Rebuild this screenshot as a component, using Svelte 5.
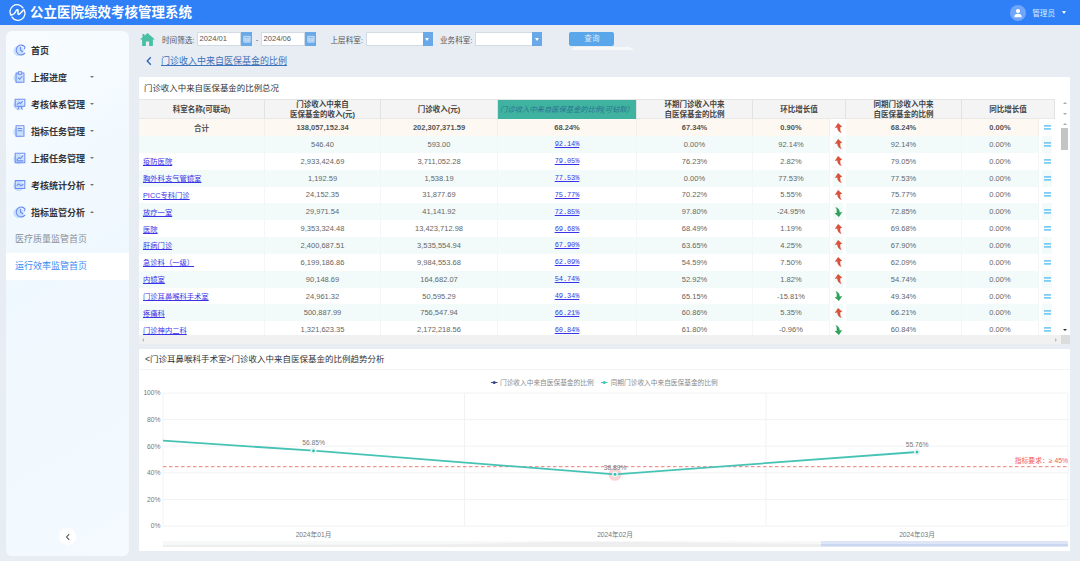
<script>
  const nav = [
    { label: '首页', icon: 'clock' },
    { label: '上报进度', icon: 'clip', caret: 'down' },
    { label: '考核体系管理', icon: 'board', caret: 'down' },
    { label: '指标任务管理', icon: 'book', caret: 'down' },
    { label: '上报任务管理', icon: 'doc', caret: 'down' },
    { label: '考核统计分析', icon: 'wave', caret: 'down' },
    { label: '指标监管分析', icon: 'clock', caret: 'up' }
  ];
  const iconPaths = {
    clock: 'M13.6 4.4A5.6 5.6 0 1 0 13.6 11.6M8.5 4.8V8L11 10M11.5 3.2L13.8 4.4L13 6.8',
    clip: 'M5.2 3.5H3.5V14H12.5V3.5H10.8M6 2H10V4.8H6ZM6 9L7.6 10.6L10.2 7.4',
    board: 'M2.5 2.5H13.5V10.5H2.5ZM5.5 14L7 10.5M10.5 14L9 10.5M4.8 8.5L7 6.3L8.5 7.6L11.2 4.8',
    book: 'M3.5 2H12.5V14H3.5ZM5.8 5.2H10.2M5.8 7.8H10.2',
    doc: 'M2.5 2.5H13.5V13.5H2.5ZM4.5 9.8L7 7.5L8.5 8.6L11.5 5.2M4.5 11.3H11.5',
    wave: 'M2.5 3H13.5V12H2.5ZM4.5 8.5L6.5 6.6L9 9L11.5 7.2'
  };
  const rows = [
    ['', '546.40', '593.00', '92.14%', '0.00%', '92.14%', 1, '92.14%'],
    ['疫防医院', '2,933,424.69', '3,711,052.28', '79.05%', '76.23%', '2.82%', 1, '79.05%'],
    ['胸外科支气管镜室', '1,192.59', '1,538.19', '77.53%', '0.00%', '77.53%', 1, '77.53%'],
    ['PICC专科门诊', '24,152.35', '31,877.69', '75.77%', '70.22%', '5.55%', 1, '75.77%'],
    ['放疗一室', '29,971.54', '41,141.92', '72.85%', '97.80%', '-24.95%', 0, '72.85%'],
    ['医院', '9,353,324.48', '13,423,712.98', '69.68%', '68.49%', '1.19%', 1, '69.68%'],
    ['肝病门诊', '2,400,687.51', '3,535,554.94', '67.90%', '63.65%', '4.25%', 1, '67.90%'],
    ['急诊科（一级）', '6,199,186.86', '9,984,553.68', '62.09%', '54.59%', '7.50%', 1, '62.09%'],
    ['内镜室', '90,148.69', '164,682.07', '54.74%', '52.92%', '1.82%', 1, '54.74%'],
    ['门诊耳鼻喉科手术室', '24,961.32', '50,595.29', '49.34%', '65.15%', '-15.81%', 0, '49.34%'],
    ['疼痛科', '500,887.99', '756,547.94', '66.21%', '60.86%', '5.35%', 1, '66.21%'],
    ['门诊神内二科', '1,321,623.35', '2,172,218.56', '60.84%', '61.80%', '-0.96%', 0, '60.84%']
  ];
  const yTicks = [['100%', 23], ['80%', 49.6], ['60%', 76.2], ['40%', 102.8], ['20%', 129.4], ['0%', 156]];
  const xLines = [24, 325.5, 627, 929];
  const points = [
    { x: 174.5, y: 80.7, label: '56.85%', ly: 75 },
    { x: 476, y: 104.3, label: '38.89%', ly: 99.5 },
    { x: 778, y: 82, label: '55.76%', ly: 76.7 }
  ];
  const xLabels = [['2024年01月', 174.5], ['2024年02月', 476], ['2024年03月', 778]];
</script>

{#snippet arrow(up)}
  <svg class="arrow" class:down={!up} viewBox="0 0 10 11" aria-hidden="true">
    <path d="M4.5 0 L9.2 4.2 L7 4.6 L7 7 C7 8.5 7.5 9.8 8.6 11 C5.5 10.2 3.6 8 3.6 5 L.8 5.4 Z" />
  </svg>
{/snippet}

{#snippet equals()}
  <svg class="equals" viewBox="0 0 7 5" aria-hidden="true">
    <rect x="0" y="0.2" width="7" height="1.4" />
    <rect x="0" y="3.2" width="7" height="1.4" />
  </svg>
{/snippet}

{#snippet calBtn()}
  <span class="cal">
    <svg viewBox="0 0 9 9" aria-hidden="true"><path d="M1 1.5H8V8H1ZM1 3.5H8M3.3 3.5V8M5.7 3.5V8M1 5.7H8" /></svg>
  </span>
{/snippet}

{#snippet selectBox(width)}
  <span class="select" style="width:{width}px"><i></i></span>
{/snippet}

<div class="app">
  <header class="top">
    <svg class="logo" viewBox="0 0 18 18" aria-hidden="true">
      <path d="M14.8 4.2A7.4 7.4 0 0 0 2.2 12M3.2 13.8A7.4 7.4 0 0 0 15.8 6" />
      <path class="swoosh" d="M3 11.2C5.8 11.8 6.4 9.4 7.4 7.4C8.2 5.8 9.6 5.6 9.6 7.2C9.6 9 9 11 10.2 11C11.6 11 13 8.6 15 6.8" />
    </svg>
    <h1>公立医院绩效考核管理系统</h1>
    <div class="user">
      <span class="avatar">
        <svg viewBox="0 0 12 12" aria-hidden="true"><circle cx="6" cy="3.6" r="2.5" /><path d="M1.5 11C1.5 8 3.5 7 6 7S10.5 8 10.5 11Z" /></svg>
      </span>
      <span class="uname">管理员</span>
      <i class="user-caret"></i>
    </div>
  </header>

  <div class="body">
    <aside class="side">
      <nav>
        {#each nav as item}
          <div class="nav-item">
            <svg class="nav-icon" viewBox="0 0 16 16" aria-hidden="true">
              <circle class="blob" cx="6.5" cy="9" r="6" />
              <path d={iconPaths[item.icon]} />
            </svg>
            <span class="nav-label">{item.label}</span>
            {#if item.caret}<i class="caret {item.caret}"></i>{/if}
          </div>
        {/each}
        <div class="sub-item">医疗质量监管首页</div>
        <div class="sub-item active">运行效率监管首页</div>
      </nav>
      <button class="collapse" aria-label="收起">
        <svg viewBox="0 0 8 8" aria-hidden="true"><path d="M5.2 1.2L2.6 4L5.2 6.8" /></svg>
      </button>
    </aside>

    <main class="main">
      <div class="toolbar">
        <svg class="home" viewBox="0 0 16 14" aria-hidden="true">
          <path d="M8 0L16 7H13.8V14H9.7V9.2H6.3V14H2.2V7H0L2.6 4.7V1H4.6V2.9Z" />
        </svg>
        <span class="lbl first">时间筛选:</span>
        <span class="date">2024/01</span>{@render calBtn()}
        <span class="dash">-</span>
        <span class="date">2024/06</span>{@render calBtn()}
        <span class="lbl second">上层科室:</span>
        {@render selectBox(67)}
        <span class="lbl third">业务科室:</span>
        {@render selectBox(67)}
        <div class="query-wrap">
          <button class="query">查询</button>
          <span class="tip"></span>
        </div>
      </div>

      <div class="crumb">
        <svg viewBox="0 0 8 10" aria-hidden="true"><path d="M5.8 1.2L2.2 5L5.8 8.8" /></svg>
        <a href="#top">门诊收入中来自医保基金的比例</a>
      </div>

      <section class="panel table-panel">
        <h2>门诊收入中来自医保基金的比例总况</h2>
        <div class="table-wrap">
          <div class="table-col">
            <div class="grid head">
              <div>科室名称(可联动)</div>
              <div>门诊收入中来自<br />医保基金的收入(元)</div>
              <div>门诊收入(元)</div>
              <div class="hl">门诊收入中来自医保基金的比例(可钻取）</div>
              <div>环期门诊收入中来<br />自医保基金的比例</div>
              <div class="span2">环比增长值</div>
              <div>同期门诊收入中来<br />自医保基金的比例</div>
              <div class="span2">同比增长值</div>
            </div>
            <div class="grid row total">
              <div>合计</div>
              <div>138,057,152.34</div>
              <div>202,307,371.59</div>
              <div>68.24%</div>
              <div>67.34%</div>
              <div>0.90%</div>
              <div class="ico"><span>{@render arrow(true)}</span></div>
              <div>68.24%</div>
              <div>0.00%</div>
              <div class="ico"><span>{@render equals()}</span></div>
            </div>
            {#each rows as r, i}
              <div class="grid row" class:tint={i % 2 === 0}>
                <div class="name"><a href="#top">{r[0]}</a></div>
                <div>{r[1]}</div>
                <div>{r[2]}</div>
                <div><a class="mono" href="#top">{r[3]}</a></div>
                <div>{r[4]}</div>
                <div>{r[5]}</div>
                <div class="ico"><span>{@render arrow(r[6] === 1)}</span></div>
                <div>{r[7]}</div>
                <div>0.00%</div>
                <div class="ico"><span>{@render equals()}</span></div>
              </div>
            {/each}
          </div>
          <div class="vbar">
            <div class="track">
              <i class="up a1"></i>
              <i class="dn a2"></i>
              <i class="up a3"></i>
              <span class="thumb"></span>
              <i class="dn a4"></i>
            </div>
          </div>
        </div>
        <div class="hbar">
          <i class="lf"></i>
          <i class="rt"></i>
          <span class="corner"></span>
        </div>
      </section>

      <section class="panel chart-panel">
        <h2>&lt;门诊耳鼻喉科手术室&gt;门诊收入中来自医保基金的比例趋势分析</h2>
        <svg class="chart" viewBox="0 0 931 181" aria-label="趋势图">
          <g class="legend">
            <path class="l1" d="M352 12.5H358.5" /><circle class="l1d" cx="355.2" cy="12.5" r="1.6" />
            <text x="361" y="15">门诊收入中来自医保基金的比例</text>
            <path class="l2" d="M462 12.5H468.5" /><circle class="l2d" cx="465.2" cy="12.5" r="1.6" />
            <text x="471.7" y="15">同期门诊收入中来自医保基金的比例</text>
          </g>
          {#each yTicks as t}
            <line class="grid-line" x1="24" x2="929" y1={t[1]} y2={t[1]} />
            <text class="tick" x="21.5" y={t[1] + 2.4} text-anchor="end">{t[0]}</text>
          {/each}
          {#each xLines as x}
            <line class="grid-line" x1={x} x2={x} y1="23" y2="156" />
          {/each}
          {#each xLabels as l}
            <text class="tick" x={l[1]} y="166.5" text-anchor="middle">{l[0]}</text>
          {/each}
          <line class="ref" x1="24" x2="929" y1="96.7" y2="96.7" />
          <text class="ref-label" x="929" y="93" text-anchor="end">指标要求：≥ 45%</text>
          <circle class="halo" cx="476" cy="104.3" r="6.5" />
          <polyline class="series" points="24,70.7 174.5,80.7 476,104.3 778,82" />
          {#each points as p}
            <circle class="pt-ring" cx={p.x} cy={p.y} r="2.8" />
            <circle class="pt" cx={p.x} cy={p.y} r="1.5" />
            <text class="tick" x={p.x} y={p.ly} text-anchor="middle">{p.label}</text>
          {/each}
          <rect class="slider-bg" x="24" y="171" width="905" height="6" />
          <path class="slider-area" d="M24 175 L300 174.5 L420 172 L500 172 L680 174 H929 V177 H24Z" />
          <rect class="slider-sel" x="682" y="171" width="247" height="6" />
          <line class="slider-line" x1="682" x2="929" y1="175" y2="175" />
        </svg>
      </section>
    </main>
  </div>
</div>

<style>
  :global(body) { margin: 0; background: #e8edf4; }
  .app {
    width: 1080px; height: 561px; overflow: hidden; background: #e8edf4;
    font-family: "Liberation Sans", "Noto Sans CJK SC", sans-serif; color: #555;
  }
  .top {
    height: 25px; background: #2f7ff7; display: flex; align-items: center;
    color: #fff; padding: 0 14px 0 9px; box-sizing: border-box;
  }
  .logo { width: 17px; height: 17px; fill: none; stroke: #fff; stroke-width: 1.4; stroke-linecap: round; }
  .logo .swoosh { stroke-width: 1.6; stroke-linejoin: round; }
  h1 { margin: 0 0 0 4px; font-size: 13.5px; font-weight: 700; line-height: 25px; white-space: nowrap; }
  .user { margin-left: auto; display: flex; align-items: center; }
  .avatar {
    width: 16px; height: 16px; border-radius: 50%; background: #6fa5fa;
    display: flex; align-items: center; justify-content: center;
  }
  .avatar svg { width: 10px; height: 10px; fill: #fff; }
  .uname { margin-left: 6px; font-size: 7.6px; color: #dce9ff; }
  .user-caret {
    margin-left: 7px; width: 0; height: 0; border: 2.5px solid transparent;
    border-top: 3px solid #fff; border-bottom: 0;
  }
  .body { display: flex; height: 536px; }
  .side {
    margin: 6px 0 5px 6px; width: 123px; border-radius: 6px; position: relative;
    background: linear-gradient(150deg, #f8fcff 0%, #eff8fe 45%, #f4faff 100%);
    padding-top: 5.5px; box-sizing: border-box;
  }
  .nav-item {
    height: 27px; display: flex; align-items: center; padding-left: 6.5px;
    font-size: 9px; font-weight: 700; color: #33333a;
  }
  .nav-icon {
    width: 14px; height: 14px; margin-right: 4.5px; fill: none; stroke: #6c8bf2; flex: none;
    stroke-width: 1.2; stroke-linecap: round; stroke-linejoin: round;
  }
  .blob { fill: #bcd9fb; stroke: none; opacity: .8; }
  .nav-label { width: 54px; white-space: nowrap; flex: none; }
  .caret { margin-left: 5px; width: 0; height: 0; border: 2px solid transparent; }
  .caret.down { border-top: 2.5px solid #777; border-bottom: 0; }
  .caret.up { border-bottom: 2.5px solid #777; border-top: 0; }
  .sub-item { height: 27px; line-height: 27px; padding-left: 9px; font-size: 9px; color: #8a8f96; }
  .sub-item.active { background: #fff; color: #3b8af2; }
  .collapse {
    position: absolute; left: 53px; bottom: 11px; width: 17px; height: 17px; padding: 0;
    border: 0; border-radius: 50%; background: #fff; display: flex; align-items: center; justify-content: center;
  }
  .collapse svg { width: 8px; height: 8px; fill: none; stroke: #555; stroke-width: 1.1; }

  .main { margin-left: 10px; width: 931px; }
  .toolbar {
    display: flex; align-items: center; height: 14px; margin-top: 7px;
    font-size: 7.6px; color: #555;
  }
  .home { width: 15px; height: 13px; fill: #49bfa4; margin-left: 1px; flex: none; }
  .lbl { white-space: nowrap; }
  .lbl.first { margin-left: 7px; margin-right: 3px; }
  .lbl.second { margin-left: 14px; margin-right: 3px; }
  .lbl.third { margin-left: 7px; margin-right: 3px; }
  .date {
    width: 44px; height: 14px; box-sizing: border-box; background: #fff; border: 1px solid #d3dbe4;
    padding-left: 1px; line-height: 12px; color: #555;
  }
  .cal {
    width: 11px; height: 14px; background: #6aa9e8; display: flex; align-items: center; justify-content: center;
  }
  .cal svg { width: 8px; height: 8px; fill: none; stroke: #fff; stroke-width: .7; }
  .dash { width: 9px; text-align: center; }
  .select {
    height: 14px; box-sizing: border-box; background: #fff; border: 1px solid #d3dbe4;
    position: relative; display: block;
  }
  .select i {
    position: absolute; right: -1px; top: -1px; width: 10px; height: 14px; background: #6aa9e8;
  }
  .select i::after {
    content: ""; position: absolute; left: 2.5px; top: 5.5px; border: 2.5px solid transparent;
    border-top: 3px solid #fff; border-bottom: 0;
  }
  .query-wrap { margin-left: 27px; position: relative; }
  .query {
    display: block; width: 45px; height: 14px; padding: 0; border: 0; border-radius: 2px;
    background: #5aa6ea; color: #dbeaf9; font: inherit; line-height: 14px;
  }
  .tip {
    position: absolute; left: 1px; top: 15px; width: 64px; height: 3px; background: #f6f8fa;
    clip-path: polygon(0 100%, 6% 0, 92% 0, 100% 100%);
  }
  .crumb { height: 14px; margin-top: 7.5px; margin-left: 6px; display: flex; align-items: center; }
  .crumb svg { width: 8px; height: 10px; fill: none; stroke: #2c62b5; stroke-width: 1.3; }
  .crumb a { margin-left: 8px; font-size: 9px; color: #3e72b8; letter-spacing: 0; }

  .panel { background: #fff; }
  .table-panel { margin-top: 9.5px; height: 267px; display: flex; flex-direction: column; }
  h2 {
    margin: 0; font-size: 8.45px; font-weight: 400; color: #333; height: 22px; line-height: 22px;
    padding-left: 5px; white-space: nowrap;
  }
  .table-wrap { display: flex; height: 236px; overflow: hidden; }
  .table-col { width: 916px; }
  .grid {
    display: grid;
    grid-template-columns: 126px 116px 117px 139px 116px 77px 16px 116px 77px 16px;
  }
  .head { height: 20px; background: #f4f4f4; border-top: 1px solid #e4e6e6; box-sizing: border-box;
    border-bottom: 1px solid #e8e8e8; font-size: 7.5px; font-weight: 700; color: #444; }
  .head > div {
    display: flex; align-items: center; justify-content: center; text-align: center; line-height: 9.5px;
    border-right: 1px solid #e0e3e3; box-sizing: border-box; white-space: nowrap;
  }
  .head .span2 { grid-column: span 2; }
  .head .hl { background: #40b3a0; color: #2a7290; font-style: italic; font-weight: 400; font-size: 7.3px; }
  .row { height: 16.85px; font-size: 7.5px; color: #666; }
  .row > div {
    display: flex; align-items: center; justify-content: center; white-space: nowrap;
    border-right: 1px solid #f3f6f6; box-sizing: border-box; min-width: 0;
  }
  .row.tint > div:not(.ico) { background: #f2fbfa; }
  .row.total > div:not(.ico) { background: #fdf8f2; font-weight: 700; color: #555; border-right-color: #f6efe6; }
  .row.total { height: 17px; }
  .row .name { justify-content: flex-start; padding-left: 4px; font-size: 7.3px; }
  .row a { color: #3a34e8; }
  .row .mono { font-family: "Liberation Mono", monospace; font-size: 7px; letter-spacing: -.1px; }
  .row .ico { border-right: 0; justify-content: flex-start; padding-left: 3px; }
  .row .ico > span {
    width: 10px; height: 100%; display: flex; align-items: center; justify-content: center;
  }
  .row.tint .ico > span { background: #f2fbfa; }
  .row.total .ico > span { background: #fff; }
  .arrow { width: 9px; height: 10px; fill: #d9523c; flex: none; }
  .arrow.down { fill: #2fa35a; transform: rotate(180deg); }
  .equals { width: 7px; height: 5px; fill: #5bbff4; flex: none; }
  .vbar { width: 15px; display: flex; justify-content: flex-end; }
  .track { width: 8px; margin-right: 1px; position: relative; }
  .track i { position: absolute; left: 2px; width: 0; height: 0; border: 2px solid transparent; }
  .track i.up { border-bottom: 2.5px solid #aaa; border-top: 0; }
  .track i.dn { border-top: 2.5px solid #aaa; border-bottom: 0; }
  .a1 { top: 3px; }
  .a2 { top: 14px; }
  .a3 { top: 24px; }
  .a4 { bottom: 4px; border-top-color: #333 !important; }
  .thumb { position: absolute; left: 0; top: 29px; width: 7px; height: 22px; background: #c4c4c4; }
  .hbar { height: 9px; background: #f1f1f1; position: relative; }
  .hbar i { position: absolute; top: 2.5px; width: 0; height: 0; border: 2px solid transparent; }
  .hbar .lf { left: 3px; border-right: 2.5px solid #bbb; border-left: 0; }
  .hbar .rt { right: 13px; border-left: 2.5px solid #bbb; border-right: 0; }
  .corner { position: absolute; right: 0; top: 0; width: 9px; height: 9px; background: #dcdcdc; }

  .chart-panel { margin-top: 5px; height: 202px; }
  .chart-panel h2 { height: 21px; line-height: 21px; border-bottom: 1px solid #f2f4f5; box-sizing: border-box; padding-left: 6px; font-size: 8.5px; }
  .chart { display: block; width: 931px; height: 181px; }
  .legend text { font-size: 6.7px; fill: #8a8a8a; }
  .l1 { stroke: #3a4a8c; stroke-width: 1; }
  .l1d { fill: #3a4a8c; }
  .l2 { stroke: #45c6b8; stroke-width: 1; }
  .l2d { fill: #45c6b8; }
  .grid-line { stroke: #f0f2f4; stroke-width: 1; }
  .tick { font-size: 6.7px; fill: #777; }
  .ref { stroke: #f26a6a; stroke-width: .9; stroke-dasharray: 3.5 2.5; }
  .ref-label { font-size: 6.8px; fill: #f25a5a; }
  .series { fill: none; stroke: #46c3b5; stroke-width: 1.8; }
  .halo { fill: #fbc9c9; opacity: .8; }
  .pt-ring { fill: #fff; stroke: #cfe6e6; stroke-width: .6; }
  .pt { fill: #30c0b0; }
  .slider-bg { fill: #f7f8f8; }
  .slider-area { fill: #eeeeee; }
  .slider-sel { fill: #dde5f6; }
  .slider-line { stroke: #b9c8ea; stroke-width: 1; }
</style>
